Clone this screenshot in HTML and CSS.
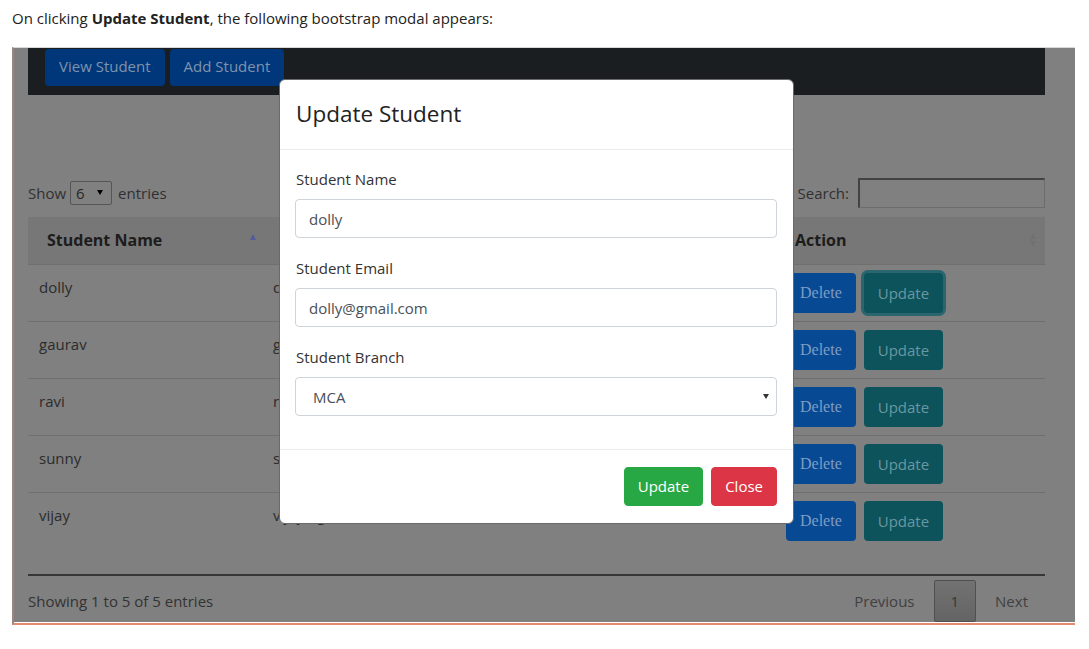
FILE: index.html
```html
<!DOCTYPE html>
<html lang="en">
<head>
<meta charset="utf-8">
<title>Update Student modal</title>
<link rel="stylesheet" href="styles.css">
</head>
<body>
<p class="intro">On clicking <b>Update Student</b>, the following bootstrap modal appears:</p>
<div class="shot">
  <div class="app">
    <nav class="navbar">
      <button class="nav-btn">View Student</button>
      <button class="nav-btn">Add Student</button>
    </nav>
    <div class="dt-top">
      <label class="dt-length">Show <span class="mini-select"><select><option>6</option></select></span> entries</label>
      <label class="dt-search">Search: <input type="text"></label>
    </div>
    <div class="dt-wrap">
      <table class="dt">
        <colgroup>
          <col class="c-name"><col class="c-email"><col class="c-branch"><col class="c-act">
        </colgroup>
        <thead>
          <tr>
            <th class="th-name">Student Name<span class="sort asc"></span></th>
            <th>Student Email<span class="sort both"></span></th>
            <th>Student Branch<span class="sort both"></span></th>
            <th class="th-act">Action<span class="sort both"></span></th>
          </tr>
        </thead>
        <tbody>
          <tr><td>dolly</td><td>dolly@gmail.com</td><td>MCA</td><td class="act"><button class="btn-del">Delete</button><button class="btn-upd focus">Update</button></td></tr>
          <tr><td>gaurav</td><td>gaurav@gmail.com</td><td>BCA</td><td class="act"><button class="btn-del">Delete</button><button class="btn-upd">Update</button></td></tr>
          <tr><td>ravi</td><td>ravi@gmail.com</td><td>MCA</td><td class="act"><button class="btn-del">Delete</button><button class="btn-upd">Update</button></td></tr>
          <tr><td>sunny</td><td>sunny@gmail.com</td><td>B.Tech</td><td class="act"><button class="btn-del">Delete</button><button class="btn-upd">Update</button></td></tr>
          <tr><td>vijay</td><td>vijay@gmail.com</td><td>MBA</td><td class="act"><button class="btn-del">Delete</button><button class="btn-upd">Update</button></td></tr>
        </tbody>
      </table>
    </div>
    <div class="dt-bottom">
      <div class="dt-info">Showing 1 to 5 of 5 entries</div>
      <div class="dt-paginate">
        <span class="pg disabled">Previous</span><span class="pg current">1</span><span class="pg disabled">Next</span>
      </div>
    </div>
  </div>
  <div class="modal">
    <div class="modal-header"><h5 class="modal-title">Update Student</h5></div>
    <div class="modal-body">
      <div class="form-group">
        <label class="form-label">Student Name</label>
        <input class="form-control" type="text" value="dolly">
      </div>
      <div class="form-group">
        <label class="form-label">Student Email</label>
        <input class="form-control" type="text" value="dolly@gmail.com">
      </div>
      <div class="form-group">
        <label class="form-label">Student Branch</label>
        <span class="select-wrap"><select class="form-select"><option>MCA</option></select></span>
      </div>
    </div>
    <div class="modal-footer">
      <button class="btn btn-success">Update</button>
      <button class="btn btn-danger">Close</button>
    </div>
  </div>
</div>
</body>
</html>
```

FILE: styles.css
```css
* { box-sizing: border-box; }
html, body { margin: 0; background: #fff; }
body {
  font-family: "Open Sans", "Noto Sans", sans-serif;
  color: #212529;
  width: 1089px;
  height: 649px;
  overflow: hidden;
}
.intro {
  margin: 0;
  padding: 6px 12px;
  font-size: 15px;
  line-height: 24px;
  color: #222;
}
.intro b { font-weight: 700; }

/* embedded screenshot, shown dimmed behind the modal */
.shot {
  position: relative;
  margin: 11px 0 0 12px;
  width: 1063px;
  border-top: 1px solid #d8d8d8;
  border-left: 2px solid #9c857e;
  border-bottom: 2px solid #e28b6d;
}
.app {
  padding: 0 30px 0 14px;
  background: #808080;
  font-size: 15px;
  color: #2c2c2c;
}
.navbar {
  height: 47px;
  background: #1b1e21;
  display: flex;
  align-items: flex-start;
  gap: 5px;
  padding: 1px 17px;
}
.nav-btn {
  font: inherit;
  font-size: 15px;
  line-height: 23px;
  height: 37px;
  padding: 6px 14px 8px;
  border: 0;
  border-radius: 4px;
  background: #00377a;
  color: #7f93ad;
}

.dt-top {
  margin-top: 83px;
  height: 30px;
  display: flex;
  justify-content: space-between;
  align-items: center;
}
.dt-length, .dt-search {
  display: flex;
  align-items: center;
  line-height: 24px;
  color: #303030;
}
.mini-select {
  position: relative;
  display: inline-block;
  margin: 0 6px 0 4px;
}
.mini-select select {
  appearance: none;
  -webkit-appearance: none;
  display: block;
  width: 42px;
  height: 24px;
  padding: 0 0 0 5px;
  border: 1px solid #555;
  border-radius: 2px;
  background: #808080;
  font: inherit;
  font-size: 15px;
  line-height: 22px;
  color: #262626;
}
.mini-select::after {
  content: "";
  position: absolute;
  right: 9px;
  top: 9px;
  border-left: 3px solid transparent;
  border-right: 3px solid transparent;
  border-top: 5px solid #000;
}
.dt-search input {
  margin-left: 9px;
  width: 187px;
  height: 30px;
  border: 1px solid #6c6c6c;
  border-top: 2px solid #424242;
  border-left: 2px solid #424242;
  background: #808080;
}

.dt-wrap {
  margin-top: 9px;
  padding-bottom: 25px;
  border-bottom: 2px solid #363636;
}
.dt {
  width: 100%;
  table-layout: fixed;
  border-collapse: separate;
  border-spacing: 0;
}
.c-name { width: 234px; }
.c-email { width: 278px; }
.c-branch { width: 236px; }
.c-act { width: 269px; }
.dt th {
  background: #777;
  text-align: left;
  font-size: 16px;
  font-weight: 700;
  line-height: 24px;
  padding: 11px 5px 12px 19px;
  color: #1c1c1c;
  white-space: nowrap;
  overflow: hidden;
}
.dt th.th-act { padding-right: 8px; }
.sort {
  float: right;
  position: relative;
  width: 7px;
  height: 24px;
}
.sort.asc::before {
  content: "";
  position: absolute;
  left: 0;
  top: 6px;
  border-left: 3.5px solid transparent;
  border-right: 3.5px solid transparent;
  border-bottom: 6px solid #555b9c;
}
.sort.both::before, .sort.both::after {
  content: "";
  position: absolute;
  left: 0;
  border-left: 3.5px solid transparent;
  border-right: 3.5px solid transparent;
}
.sort.both::before { top: 5px; border-bottom: 6px solid #717171; }
.sort.both::after { top: 13px; border-top: 6px solid #717171; }

.dt td {
  border-top: 1px solid #6f6f6f;
  vertical-align: top;
  padding: 10px 11px 13px;
  line-height: 24px;
  white-space: nowrap;
  overflow: hidden;
}
.dt td.act { padding: 8px 10px; }
.act button { vertical-align: top; }
.btn-del {
  font-family: "Liberation Serif", "Times New Roman", serif;
  font-size: 16px;
  line-height: 24px;
  height: 40px;
  padding: 8px 14px;
  border: 0;
  border-radius: 4px;
  background: #084994;
  color: #7f9cc2;
}
.btn-upd {
  font-family: "Open Sans", "Noto Sans", sans-serif;
  font-size: 15px;
  line-height: 24px;
  height: 40px;
  margin-left: 8px;
  padding: 8px 14px;
  border: 0;
  border-radius: 4px;
  background: #0c535c;
  color: #6a97a0;
}
.btn-upd.focus { box-shadow: 0 0 0 3px #2b656d; }

.dt-bottom {
  margin-top: 4px;
  margin-bottom: 1px;
  height: 42px;
  display: flex;
  justify-content: space-between;
  align-items: center;
}
.dt-info { line-height: 24px; color: #333; }
.dt-paginate { display: flex; }
.pg {
  margin-left: 2px;
  padding: 8px 16px;
  line-height: 24px;
  border: 1px solid transparent;
  border-radius: 2px;
  color: #404040;
}
.pg.current {
  border-color: #505050;
  background: linear-gradient(#727272, #646464);
  color: #363636;
}

/* the open modal dialog */
.modal {
  position: absolute;
  left: 265px;
  top: 31px;
  width: 515px;
  background: #fff;
  border: 1px solid #6a6a6a;
  border-radius: 6px;
  color: #212529;
  font-size: 15px;
}
.modal-header {
  padding: 16px 16px 17px;
  border-bottom: 1px solid #e9ecef;
}
.modal-title {
  margin: 0;
  font-size: 22.5px;
  font-weight: 400;
  line-height: 36px;
  color: #222;
}
.modal-body {
  padding: 17px 16px 33px 15px;
  display: flex;
  flex-direction: column;
  gap: 18px;
}
.form-group { display: flex; flex-direction: column; }
.form-label {
  display: block;
  line-height: 24px;
  margin: 0 0 8px 1px;
  color: #333;
}
.form-control, .form-select {
  display: block;
  width: 100%;
  height: 39px;
  padding: 6px 13px;
  font: inherit;
  font-size: 15px;
  line-height: 24px;
  color: #495057;
  background: #fff;
  border: 1px solid #ced4da;
  border-radius: 4px;
}
.select-wrap { position: relative; display: block; }
.form-select {
  appearance: none;
  -webkit-appearance: none;
  padding-left: 17px;
}
.select-wrap::after {
  content: "";
  position: absolute;
  right: 8px;
  top: 17px;
  border-left: 3px solid transparent;
  border-right: 3px solid transparent;
  border-top: 5px solid #333;
}
.modal-footer {
  display: flex;
  justify-content: flex-end;
  gap: 8px;
  padding: 17px 16px 17px;
  border-top: 1px solid #e9ecef;
}
.btn {
  font: inherit;
  font-size: 15px;
  line-height: 25px;
  height: 39px;
  padding: 6px 13px;
  border: 1px solid transparent;
  border-radius: 4px;
  color: #fff;
}
.btn-success { background: #28a745; border-color: #28a745; }
.btn-danger { background: #dc3545; border-color: #dc3545; }
```
